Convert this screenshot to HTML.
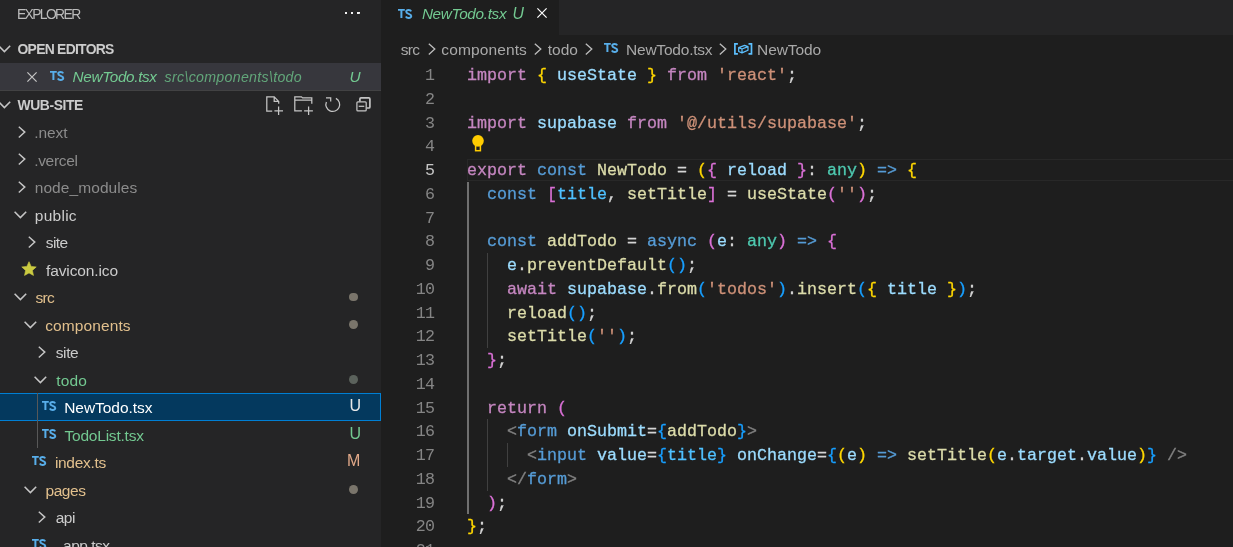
<!DOCTYPE html>
<html>
<head>
<meta charset="utf-8">
<title>NewTodo.tsx - wub-site</title>
<style>
*{box-sizing:border-box;margin:0;padding:0}
html,body{width:1233px;height:547px;overflow:hidden;background:#1e1e1e}
body{position:relative;font-family:"Liberation Sans",sans-serif;color:#cccccc;font-size:16px}
.abs{position:absolute}
#sidebar{position:absolute;left:0;top:0;width:381px;height:547px;background:#252526;overflow:hidden;will-change:transform}
.t{position:absolute;white-space:pre;line-height:1}
.hdr{font-size:13.9px;color:#bbbbbb}
.bold{font-weight:bold}
.row{position:absolute;left:0;width:381px;height:27.5px}
.lbl{position:absolute;top:1.05px;height:27.5px;line-height:27.5px;font-size:15.5px;white-space:pre;color:#cccccc}
.tabl{position:absolute;top:-4.5px;height:35px;line-height:35px;font-size:15.5px;white-space:pre}
.bc{position:absolute;top:35.6px;height:27.5px;line-height:27.5px;font-size:15.5px;white-space:pre}
.badge{position:absolute;top:-0.8px;height:27.5px;line-height:27.5px;font-size:16px;white-space:pre}
.dot{position:absolute;left:349.3px;width:8.8px;height:8.8px;border-radius:50%;top:9.4px}
.ts{position:absolute;font-weight:bold;font-size:13.4px;color:#519aba;line-height:1;white-space:pre;transform-origin:0 0;transform:scaleX(0.83);margin-top:-2.1px;margin-left:-0.3px}
svg{position:absolute;overflow:visible}
#editor{position:absolute;left:381px;top:0;width:852px;height:547px;background:#1e1e1e;overflow:hidden;will-change:transform}
#tabs{position:absolute;left:0;top:0;width:852px;height:35px;background:#252526}
#tab{position:absolute;left:0;top:0;width:178px;height:35px;background:#1e1e1e}
.code{position:absolute;left:86.10000000000002px;font-family:"Liberation Mono",monospace;font-size:16.665px;line-height:23.75px;height:23.75px;white-space:pre;color:#d4d4d4;-webkit-text-stroke:0.3px}
.ln{position:absolute;left:0;width:53.5px;text-align:right;font-family:"Liberation Mono",monospace;font-size:16.665px;line-height:23.75px;height:23.75px;color:#858585;white-space:pre;letter-spacing:-0.6px}
.k{color:#c586c0}.b{color:#569cd6}.v{color:#9cdcfe}.f{color:#dcdcaa}.s{color:#ce9178}.ty{color:#4ec9b0}
.g{color:#ffd700}.p{color:#da70d6}.u{color:#179fff}.gr{color:#808080}.c{color:#4fc1ff}
</style>
</head>
<body>
<div id="sidebar">
  <div class="t hdr" style="left:17.0px;top:7.6px;letter-spacing:-1.641px">EXPLORER</div>
  <div class="abs" style="left:345px;top:12px;width:2px;height:2px;background:#f2f2f2"></div>
  <div class="abs" style="left:351px;top:12px;width:2px;height:2px;background:#f2f2f2"></div>
  <div class="abs" style="left:357px;top:12px;width:2.6px;height:2px;background:#f2f2f2"></div>
  <div class="abs" style="left:359px;top:13px;width:1.4px;height:1px;background:#d0d0d0"></div>
  <svg style="left:-2.1px;top:45.4px" width="12.8" height="7.6" viewBox="0 0 12.8 7.6"><path d="M0.6 0.8 L6.4 6.6 L12.2 0.8" fill="none" stroke="#c5c5c5" stroke-width="1.55"/></svg>
  <div class="t hdr bold" style="left:17.5px;top:42.7px;color:#cccccc;letter-spacing:-0.721px">OPEN EDITORS</div>
  <div class="row" style="top:63px;background:#37373d">
    <svg style="left:27.3px;top:9.1px" width="10" height="10" viewBox="0 0 10 10"><path d="M0.4 0.4 L9.6 9.6 M9.6 0.4 L0.4 9.6" stroke="#c5c5c5" stroke-width="1.2" fill="none"/></svg>
    <svg style="left:50.3px;top:8.0px" width="14.2" height="9.9" viewBox="0 0 14.2 9.9"><path d="M0 0 H6.8 V1.7 H4.4 V9.1 H2.4 V1.7 H0 Z" fill="#58aeea"/><path d="M13.2 2.3 C12.8 1.4 11.8 0.95 10.7 0.95 C9.2 0.95 8.2 1.7 8.2 2.8 C8.2 5.3 13.3 4.5 13.3 7.1 C13.3 8.3 12.1 8.95 10.6 8.95 C9.4 8.95 8.4 8.5 7.8 7.5" fill="none" stroke="#58aeea" stroke-width="1.9"/></svg>
    <div class="lbl" style="left:72.58px;font-size:15.3px;letter-spacing:-0.344px;color:#73c991;font-style:italic;top:0px;">NewTodo.tsx</div>
    <div class="lbl" style="left:164.58px;font-size:14.2px;letter-spacing:0.301px;color:#62a67a;font-style:italic;top:1.1px;">src\components\todo</div>
    <div class="badge" style="left:349.6px;top:-0.3px;font-size:15.4px;color:#73c991;font-style:italic">U</div>
  </div>
  <div class="abs" style="left:0;top:90.3px;width:381px;height:1px;background:#424243"></div>
  <svg style="left:-2.1px;top:101.1px" width="12.8" height="7.6" viewBox="0 0 12.8 7.6"><path d="M0.6 0.8 L6.4 6.6 L12.2 0.8" fill="none" stroke="#c5c5c5" stroke-width="1.55"/></svg>
  <div class="t hdr bold" style="left:17.5px;top:98.6px;color:#cccccc;letter-spacing:-0.403px">WUB-SITE</div>
  <div class="row" style="top:118.25px;"><svg style="left:17.699999999999996px;top:7.6px" width="7.8" height="12.2" viewBox="0 0 7.8 12.2"><path d="M0.8 0.7 L6.8 6.1 L0.8 11.5" fill="none" stroke="#c5c5c5" stroke-width="1.45"/></svg><div class="lbl" style="left:34.16px;letter-spacing:-0.057px;color:#8c8c8c;">.next</div></div><div class="row" style="top:145.75px;"><svg style="left:17.699999999999996px;top:7.6px" width="7.8" height="12.2" viewBox="0 0 7.8 12.2"><path d="M0.8 0.7 L6.8 6.1 L0.8 11.5" fill="none" stroke="#c5c5c5" stroke-width="1.45"/></svg><div class="lbl" style="left:34.16px;letter-spacing:-0.313px;color:#8c8c8c;">.vercel</div></div><div class="row" style="top:173.25px;"><svg style="left:17.699999999999996px;top:7.6px" width="7.8" height="12.2" viewBox="0 0 7.8 12.2"><path d="M0.8 0.7 L6.8 6.1 L0.8 11.5" fill="none" stroke="#c5c5c5" stroke-width="1.45"/></svg><div class="lbl" style="left:34.72px;letter-spacing:0.079px;color:#8c8c8c;">node_modules</div></div><div class="row" style="top:200.75px;"><svg style="left:14.399999999999999px;top:9.9px" width="12.8" height="7.6" viewBox="0 0 12.8 7.6"><path d="M0.6 0.8 L6.4 6.6 L12.2 0.8" fill="none" stroke="#c5c5c5" stroke-width="1.55"/></svg><div class="lbl" style="left:34.86px;letter-spacing:0.251px;color:#cccccc;">public</div></div><div class="row" style="top:228.25px;"><svg style="left:27.699999999999996px;top:7.6px" width="7.8" height="12.2" viewBox="0 0 7.8 12.2"><path d="M0.8 0.7 L6.8 6.1 L0.8 11.5" fill="none" stroke="#c5c5c5" stroke-width="1.45"/></svg><div class="lbl" style="left:45.77px;letter-spacing:-0.551px;color:#cccccc;">site</div></div><div class="row" style="top:255.75px;"><svg style="left:21.199999999999996px;top:4.85px" width="16" height="16" viewBox="0 0 16 16"><path d="M8.00 0.70 L10.12 5.39 L15.23 5.95 L11.42 9.41 L12.47 14.45 L8.00 11.90 L3.53 14.45 L4.58 9.41 L0.77 5.95 L5.88 5.39 Z" fill="#cbcb41" stroke="#cbcb41" stroke-width="0.6" stroke-linejoin="round"/></svg><div class="lbl" style="left:45.98px;letter-spacing:-0.108px;color:#cccccc;">favicon.ico</div></div><div class="row" style="top:283.25px;"><svg style="left:14.399999999999999px;top:9.9px" width="12.8" height="7.6" viewBox="0 0 12.8 7.6"><path d="M0.6 0.8 L6.4 6.6 L12.2 0.8" fill="none" stroke="#c5c5c5" stroke-width="1.55"/></svg><div class="lbl" style="left:35.56px;letter-spacing:-0.75px;color:#e2c08d;">src</div><div class="dot" style="background:#7a756b"></div></div><div class="row" style="top:310.75px;"><svg style="left:24.4px;top:9.9px" width="12.8" height="7.6" viewBox="0 0 12.8 7.6"><path d="M0.6 0.8 L6.4 6.6 L12.2 0.8" fill="none" stroke="#c5c5c5" stroke-width="1.55"/></svg><div class="lbl" style="left:45.28px;letter-spacing:0.102px;color:#e2c08d;">components</div><div class="dot" style="background:#7a756b"></div></div><div class="row" style="top:338.25px;"><svg style="left:37.699999999999996px;top:7.6px" width="7.8" height="12.2" viewBox="0 0 7.8 12.2"><path d="M0.8 0.7 L6.8 6.1 L0.8 11.5" fill="none" stroke="#c5c5c5" stroke-width="1.45"/></svg><div class="lbl" style="left:55.77px;letter-spacing:-0.411px;color:#cccccc;">site</div></div><div class="row" style="top:365.75px;"><svg style="left:34.4px;top:9.9px" width="12.8" height="7.6" viewBox="0 0 12.8 7.6"><path d="M0.6 0.8 L6.4 6.6 L12.2 0.8" fill="none" stroke="#c5c5c5" stroke-width="1.55"/></svg><div class="lbl" style="left:56.19px;letter-spacing:0.212px;color:#73c991;">todo</div><div class="dot" style="background:#5b625c"></div></div><div class="row" style="top:393.25px;"><div class="abs" style="left:0;top:-0.45px;width:381px;height:28.4px;background:#04395e;border:1.25px solid #007fd4;border-left:none"></div><svg style="left:42.3px;top:8.0px" width="14.2" height="9.9" viewBox="0 0 14.2 9.9"><path d="M0 0 H6.8 V1.7 H4.4 V9.1 H2.4 V1.7 H0 Z" fill="#58aeea"/><path d="M13.2 2.3 C12.8 1.4 11.8 0.95 10.7 0.95 C9.2 0.95 8.2 1.7 8.2 2.8 C8.2 5.3 13.3 4.5 13.3 7.1 C13.3 8.3 12.1 8.95 10.6 8.95 C9.4 8.95 8.4 8.5 7.8 7.5" fill="none" stroke="#58aeea" stroke-width="1.9"/></svg><div class="lbl" style="left:64.23px;letter-spacing:-0.055px;color:#ffffff;">NewTodo.tsx</div><div class="badge" style="left:349.4px;color:#e8e8e8">U</div></div><div class="row" style="top:420.75px;"><svg style="left:42.3px;top:8.0px" width="14.2" height="9.9" viewBox="0 0 14.2 9.9"><path d="M0 0 H6.8 V1.7 H4.4 V9.1 H2.4 V1.7 H0 Z" fill="#58aeea"/><path d="M13.2 2.3 C12.8 1.4 11.8 0.95 10.7 0.95 C9.2 0.95 8.2 1.7 8.2 2.8 C8.2 5.3 13.3 4.5 13.3 7.1 C13.3 8.3 12.1 8.95 10.6 8.95 C9.4 8.95 8.4 8.5 7.8 7.5" fill="none" stroke="#58aeea" stroke-width="1.9"/></svg><div class="lbl" style="left:64.5px;letter-spacing:-0.217px;color:#73c991;">TodoList.tsx</div><div class="badge" style="left:349.4px;color:#73c991">U</div></div><div class="row" style="top:448.25px;"><svg style="left:32.3px;top:8.0px" width="14.2" height="9.9" viewBox="0 0 14.2 9.9"><path d="M0 0 H6.8 V1.7 H4.4 V9.1 H2.4 V1.7 H0 Z" fill="#58aeea"/><path d="M13.2 2.3 C12.8 1.4 11.8 0.95 10.7 0.95 C9.2 0.95 8.2 1.7 8.2 2.8 C8.2 5.3 13.3 4.5 13.3 7.1 C13.3 8.3 12.1 8.95 10.6 8.95 C9.4 8.95 8.4 8.5 7.8 7.5" fill="none" stroke="#58aeea" stroke-width="1.9"/></svg><div class="lbl" style="left:54.93px;letter-spacing:-0.309px;color:#e2c08d;">index.ts</div><div class="badge" style="left:347.0px;color:#e0a888">M</div></div><div class="row" style="top:475.75px;"><svg style="left:24.4px;top:9.9px" width="12.8" height="7.6" viewBox="0 0 12.8 7.6"><path d="M0.6 0.8 L6.4 6.6 L12.2 0.8" fill="none" stroke="#c5c5c5" stroke-width="1.55"/></svg><div class="lbl" style="left:45.49px;letter-spacing:-0.445px;color:#e2c08d;">pages</div><div class="dot" style="background:#7a756b"></div></div><div class="row" style="top:503.25px;"><svg style="left:37.699999999999996px;top:7.6px" width="7.8" height="12.2" viewBox="0 0 7.8 12.2"><path d="M0.8 0.7 L6.8 6.1 L0.8 11.5" fill="none" stroke="#c5c5c5" stroke-width="1.45"/></svg><div class="lbl" style="left:55.7px;letter-spacing:-0.469px;color:#cccccc;">api</div></div><div class="row" style="top:530.75px;"><svg style="left:32.3px;top:8.0px" width="14.2" height="9.9" viewBox="0 0 14.2 9.9"><path d="M0 0 H6.8 V1.7 H4.4 V9.1 H2.4 V1.7 H0 Z" fill="#58aeea"/><path d="M13.2 2.3 C12.8 1.4 11.8 0.95 10.7 0.95 C9.2 0.95 8.2 1.7 8.2 2.8 C8.2 5.3 13.3 4.5 13.3 7.1 C13.3 8.3 12.1 8.95 10.6 8.95 C9.4 8.95 8.4 8.5 7.8 7.5" fill="none" stroke="#58aeea" stroke-width="1.9"/></svg><div class="lbl" style="left:55.0px;letter-spacing:-0.506px;color:#cccccc;">_app.tsx</div></div><div class="abs" style="left:36.9px;top:392.85px;width:1.15px;height:55.4px;background:#585858"></div>
  <svg style="left:0;top:0" width="381" height="120" viewBox="0 0 381 120" fill="none" stroke="#c5c5c5" stroke-width="1.25">
<path d="M272.2 111.2 H266.8 V96.8 H274.2 L278.7 101.4 V103.8 M274.2 96.8 V101.4 H278.7 M274.4 110.9 H283 M278.6 106.4 V115.1"/>
<path d="M301.9 110.9 H294.8 V96.8 H301.4 L302.6 97.9 H311.8 V103.8 M294.8 100.1 H311.8 M304.1 110.9 H312.9 M308.6 106.4 V115.1"/>
<path d="M335.9 98.4 A6.9 6.9 0 1 1 326.4 101.9 M326.0 97.9 H330.7 V101.6"/>
<rect x="356.9" y="101.8" width="9.3" height="9.1" rx="1"/>
<path d="M358.7 106.3 H364.3"/>
<path d="M359.9 101.6 V99 Q359.9 97.9 361 97.9 H368.8 Q369.9 97.9 369.9 99 V106.9 Q369.9 108 368.8 108 H366.6" stroke-width="1.7"/>
</svg>
</div>
<div id="editor">
  <div id="tabs"><div id="tab">
    <svg style="left:16.80000000000001px;top:8.9px" width="14.2" height="9.9" viewBox="0 0 14.2 9.9"><path d="M0 0 H6.8 V1.7 H4.4 V9.1 H2.4 V1.7 H0 Z" fill="#58aeea"/><path d="M13.2 2.3 C12.8 1.4 11.8 0.95 10.7 0.95 C9.2 0.95 8.2 1.7 8.2 2.8 C8.2 5.3 13.3 4.5 13.3 7.1 C13.3 8.3 12.1 8.95 10.6 8.95 C9.4 8.95 8.4 8.5 7.8 7.5" fill="none" stroke="#58aeea" stroke-width="1.9"/></svg>
    <div class="tabl" style="left:40.89px;font-size:15.3px;letter-spacing:-0.314px;color:#73c991;font-style:italic;">NewTodo.tsx</div>
    <div class="tabl" style="left:131.6px;font-size:15.8px;letter-spacing:-3.221px;color:#73c991;font-style:italic;top:-3.9px;">U</div>
    <svg style="left:156.20000000000005px;top:8.0px" width="10" height="10" viewBox="0 0 10 10"><path d="M0.4 0.4 L9.6 9.6 M9.6 0.4 L0.4 9.6" stroke="#ffffff" stroke-width="1.2" fill="none"/></svg>
  </div></div>
  <div class="bc" style="left:19.74px;letter-spacing:-0.695px;color:#a9a9a9;">src</div><svg style="left:47.00000000000002px;top:43.0px" width="7.8" height="12.2" viewBox="0 0 7.8 12.2"><path d="M0.8 0.7 L6.8 6.1 L0.8 11.5" fill="none" stroke="#bdbdbd" stroke-width="1.3"/></svg><div class="bc" style="left:60.36px;letter-spacing:0.112px;color:#a9a9a9;">components</div><svg style="left:152.60000000000005px;top:43.0px" width="7.8" height="12.2" viewBox="0 0 7.8 12.2"><path d="M0.8 0.7 L6.8 6.1 L0.8 11.5" fill="none" stroke="#bdbdbd" stroke-width="1.3"/></svg><div class="bc" style="left:166.67px;letter-spacing:0.043px;color:#a9a9a9;">todo</div><svg style="left:204.19999999999996px;top:43.0px" width="7.8" height="12.2" viewBox="0 0 7.8 12.2"><path d="M0.8 0.7 L6.8 6.1 L0.8 11.5" fill="none" stroke="#bdbdbd" stroke-width="1.3"/></svg><svg style="left:222.79999999999995px;top:43.4px" width="14.2" height="9.9" viewBox="0 0 14.2 9.9"><path d="M0 0 H6.8 V1.7 H4.4 V9.1 H2.4 V1.7 H0 Z" fill="#58aeea"/><path d="M13.2 2.3 C12.8 1.4 11.8 0.95 10.7 0.95 C9.2 0.95 8.2 1.7 8.2 2.8 C8.2 5.3 13.3 4.5 13.3 7.1 C13.3 8.3 12.1 8.95 10.6 8.95 C9.4 8.95 8.4 8.5 7.8 7.5" fill="none" stroke="#58aeea" stroke-width="1.9"/></svg><div class="bc" style="left:245.0px;letter-spacing:-0.213px;color:#a9a9a9;">NewTodo.tsx</div><svg style="left:338.4px;top:43.0px" width="7.8" height="12.2" viewBox="0 0 7.8 12.2"><path d="M0.8 0.7 L6.8 6.1 L0.8 11.5" fill="none" stroke="#bdbdbd" stroke-width="1.3"/></svg><svg style="left:352.9px;top:42.7px" width="18.4" height="11.6" viewBox="0 0 18.4 11.6"><path d="M3.9 0.8 H0.9 V10.8 H3.9 M14.5 0.8 H17.5 V10.8 H14.5" fill="none" stroke="#5cc0ff" stroke-width="1.7"/><path d="M4.7 4.6 L10.6 2.3 L14.0 3.6 V7.2 L8.0 9.9 L4.7 8.5 Z M4.7 4.6 L8.0 6.0 L14.0 3.6 M8.0 6.0 V9.9" fill="none" stroke="#5cc0ff" stroke-width="1.25" stroke-linejoin="round"/></svg><div class="bc" style="left:376.12px;letter-spacing:-0.117px;color:#a9a9a9;">NewTodo</div>
  <div class="abs" style="left:86px;top:158.9px;width:800px;height:22.55px;border:1.5px solid #282828"></div><div class="abs" style="left:86.30000000000001px;top:181.75px;width:1.3px;height:332.0px;background:#707070"></div><div class="abs" style="left:106.30000000000001px;top:253.0px;width:1px;height:95.0px;background:#404040"></div><div class="abs" style="left:106.30000000000001px;top:419.25px;width:1px;height:71.25px;background:#404040"></div><div class="abs" style="left:126.30000000000001px;top:443.0px;width:1px;height:23.75px;background:#404040"></div><svg style="left:90.60000000000002px;top:134.8px" width="12" height="16.5" viewBox="0 0 12 16.5"><circle cx="6" cy="5.8" r="5.8" fill="#ffcc00"/><rect x="3.6" y="10.5" width="4.8" height="5.2" fill="none" stroke="#ffcc00" stroke-width="1.5"/></svg><div class="ln" style="top:64.05px;">1</div><div class="code" style="top:64.05px"><span class="k">import</span> <span class="g">{</span> <span class="v">useState</span> <span class="g">}</span> <span class="k">from</span> <span class="s">'react'</span>;</div><div class="ln" style="top:87.8px;">2</div><div class="ln" style="top:111.55px;">3</div><div class="code" style="top:111.55px"><span class="k">import</span> <span class="v">supabase</span> <span class="k">from</span> <span class="s">'@/utils/supabase'</span>;</div><div class="ln" style="top:135.3px;">4</div><div class="ln" style="top:159.05px;color:#c6c6c6;">5</div><div class="code" style="top:159.05px"><span class="k">export</span> <span class="b">const</span> <span class="f">NewTodo</span> = <span class="g">(</span><span class="p">{</span> <span class="v">reload</span> <span class="p">}</span>: <span class="ty">any</span><span class="g">)</span> <span class="b">=&gt;</span> <span class="g">{</span></div><div class="ln" style="top:182.8px;">6</div><div class="code" style="top:182.8px">  <span class="b">const</span> <span class="p">[</span><span class="c">title</span>, <span class="f">setTitle</span><span class="p">]</span> = <span class="f">useState</span><span class="p">(</span><span class="s">''</span><span class="p">)</span>;</div><div class="ln" style="top:206.55px;">7</div><div class="ln" style="top:230.3px;">8</div><div class="code" style="top:230.3px">  <span class="b">const</span> <span class="f">addTodo</span> = <span class="b">async</span> <span class="p">(</span><span class="v">e</span>: <span class="ty">any</span><span class="p">)</span> <span class="b">=&gt;</span> <span class="p">{</span></div><div class="ln" style="top:254.05px;">9</div><div class="code" style="top:254.05px">    <span class="v">e</span>.<span class="f">preventDefault</span><span class="u">()</span>;</div><div class="ln" style="top:277.8px;">10</div><div class="code" style="top:277.8px">    <span class="k">await</span> <span class="v">supabase</span>.<span class="f">from</span><span class="u">(</span><span class="s">'todos'</span><span class="u">)</span>.<span class="f">insert</span><span class="u">(</span><span class="g">{</span> <span class="v">title</span> <span class="g">}</span><span class="u">)</span>;</div><div class="ln" style="top:301.55px;">11</div><div class="code" style="top:301.55px">    <span class="f">reload</span><span class="u">()</span>;</div><div class="ln" style="top:325.3px;">12</div><div class="code" style="top:325.3px">    <span class="f">setTitle</span><span class="u">(</span><span class="s">''</span><span class="u">)</span>;</div><div class="ln" style="top:349.05px;">13</div><div class="code" style="top:349.05px">  <span class="p">}</span>;</div><div class="ln" style="top:372.8px;">14</div><div class="ln" style="top:396.55px;">15</div><div class="code" style="top:396.55px">  <span class="k">return</span> <span class="p">(</span></div><div class="ln" style="top:420.3px;">16</div><div class="code" style="top:420.3px">    <span class="gr">&lt;</span><span class="b">form</span> <span class="v">onSubmit</span>=<span class="u">{</span><span class="f">addTodo</span><span class="u">}</span><span class="gr">&gt;</span></div><div class="ln" style="top:444.05px;">17</div><div class="code" style="top:444.05px">      <span class="gr">&lt;</span><span class="b">input</span> <span class="v">value</span>=<span class="u">{</span><span class="c">title</span><span class="u">}</span> <span class="v">onChange</span>=<span class="u">{</span><span class="g">(</span><span class="v">e</span><span class="g">)</span> <span class="b">=&gt;</span> <span class="f">setTitle</span><span class="g">(</span><span class="v">e</span>.<span class="v">target</span>.<span class="v">value</span><span class="g">)</span><span class="u">}</span> <span class="gr">/&gt;</span></div><div class="ln" style="top:467.8px;">18</div><div class="code" style="top:467.8px">    <span class="gr">&lt;/</span><span class="b">form</span><span class="gr">&gt;</span></div><div class="ln" style="top:491.55px;">19</div><div class="code" style="top:491.55px">  <span class="p">)</span>;</div><div class="ln" style="top:515.3px;">20</div><div class="code" style="top:515.3px"><span class="g">}</span>;</div><div class="ln" style="top:539.05px;">21</div>
</div>
</body>
</html>
